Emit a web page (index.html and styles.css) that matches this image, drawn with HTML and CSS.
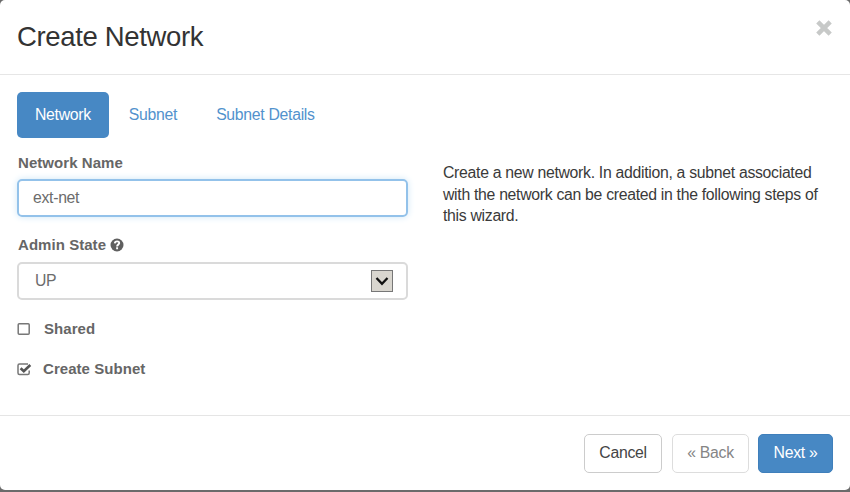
FILE: index.html
```html
<!DOCTYPE html>
<html lang="en">
<head>
<meta charset="utf-8">
<title>Create Network</title>
<link rel="stylesheet" href="styles.css">
</head>
<body>
<div class="modal">
  <header class="header">
    <h1>Create Network</h1>
    <svg class="close" viewBox="0 0 16 16" width="18" height="18"><path d="M2.5 2.5L13.5 13.5M13.5 2.5L2.5 13.5"/></svg>
  </header>
  <main class="body">
    <nav class="tabs">
      <a class="tab active">Network</a>
      <a class="tab second">Subnet</a>
      <a class="tab">Subnet Details</a>
    </nav>
    <div class="columns">
      <form class="form">
        <label class="label name-label">Network Name</label>
        <div class="field focused">ext-net</div>
        <label class="label state-label">Admin State
          <svg class="help" viewBox="0 0 14 14" width="14" height="14"><circle cx="7" cy="7" r="6.5"/><path d="M4.8 5.4C4.9 2.7 9.4 2.8 9.2 5.2C9.1 6.7 7.1 6.6 7.1 8.4M7.1 9.3V11.2"/></svg>
        </label>
        <div class="field select">UP
          <span class="arrow"><svg viewBox="0 0 14 9" width="14" height="9"><path d="M1.5 1L7 6.8L12.5 1"/></svg></span>
        </div>
        <label class="check shared"><svg viewBox="0 0 15 14" width="15" height="14"><rect x="1.2" y="1.7" width="11" height="10.6" rx="1"/></svg><span>Shared</span></label>
        <label class="check create"><svg viewBox="0 0 15 14" width="15" height="14"><path d="M12.2 8.5V11Q12.2 12.5 10.7 12.5H2.5Q1 12.5 1 11V3.5Q1 2 2.5 2H11"/><path class="tick" d="M3.6 6.2L6.8 9.3L13.3 3"/></svg><span>Create Subnet</span></label>
      </form>
      <p class="info">Create a new network. In addition, a subnet associated<br>with the network can be created in the following steps of<br>this wizard.</p>
    </div>
  </main>
  <footer class="footer">
    <button class="btn cancel">Cancel</button>
    <button class="btn back">« Back</button>
    <button class="btn next">Next »</button>
  </footer>
</div>
</body>
</html>
```
FILE: styles.css
```css
* { box-sizing: border-box; }
body {
  margin: 0;
  height: 492px;
  overflow: hidden;
  background: #6b6b6b;
  font: 15.8px/22px "Liberation Sans", Arial, sans-serif;
  letter-spacing: -0.3px;
  color: #3a3a3a;
}
.modal { display: flex; flex-direction: column; height: 490px; background: #fff; border-radius: 5px; }
.header {
  display: flex;
  justify-content: space-between;
  height: 75px;
  padding: 19px 17px 0 17px;
  border-bottom: 1px solid #e6e6e6;
}
h1 { margin: 0; font-size: 27.5px; line-height: 35px; font-weight: 400; letter-spacing: -0.35px; color: #333; }
.close { fill: none; stroke: #c7c9c8; stroke-width: 4; }
.body { height: 340px; padding: 17px 17px 0; }
.tabs { display: flex; gap: 2px; }
.tab { height: 46px; padding: 0 18px; line-height: 46px; border-radius: 5px; color: #5292cd; }
.second { margin-right: 1px; }
.active { background: #4788c4; color: #fff; }
.columns { display: grid; grid-template-columns: 391px 1fr; column-gap: 35px; }
.form { display: flex; flex-direction: column; }
.label, .check { font-size: 15px; font-weight: 700; letter-spacing: 0.05px; color: #666; }
.label { height: 22px; }
.name-label { margin: 14px 0 5px; padding-left: 1px; }
.state-label { display: flex; align-items: center; gap: 4px; margin: 17px 0 6px; padding-left: 1px; }
.help circle { fill: #5f5f5f; }
.help path { fill: none; stroke: #fff; stroke-width: 1.9; }
.field {
  display: flex;
  align-items: center;
  height: 38px;
  padding: 0 14px 1px;
  border: 2px solid #dadada;
  border-radius: 5px;
  color: #6c6c6c;
}
.focused { border-color: #93c2ea; box-shadow: 0 0 7px #cfe7f7; }
.select { justify-content: space-between; height: 38px; padding: 0 13px 0 16px; }
.arrow { display: grid; place-items: center; width: 22px; height: 22px; background: #d9d6cf; border: 1px solid #777; }
.arrow path { fill: none; stroke: #111; stroke-width: 2.3; }
.check { display: flex; align-items: center; height: 22px; }
.check svg { fill: none; stroke: #777; stroke-width: 1.5; }
.check .tick { stroke: #555; stroke-width: 2.6; }
.shared { margin-top: 18px; gap: 12px; }
.create { margin-top: 18px; gap: 11px; }
.info { margin: 24px 0 0; line-height: 21.7px; }
.footer {
  display: flex;
  justify-content: flex-end;
  height: 75px;
  padding: 18px 17px 0 0;
  border-top: 1px solid #e5e5e5;
}
.btn { height: 39px; padding: 0 0 1px; font: inherit; letter-spacing: inherit; background: #fff; border: 1px solid #ccc; border-radius: 5px; color: #444; }
.cancel { width: 78px; margin-right: 10px; }
.back { width: 77px; margin-right: 9px; border-color: #ddd; color: #858585; }
.next { width: 75px; background: #4788c4; border-color: #3f7fbb; color: #fff; }
```
